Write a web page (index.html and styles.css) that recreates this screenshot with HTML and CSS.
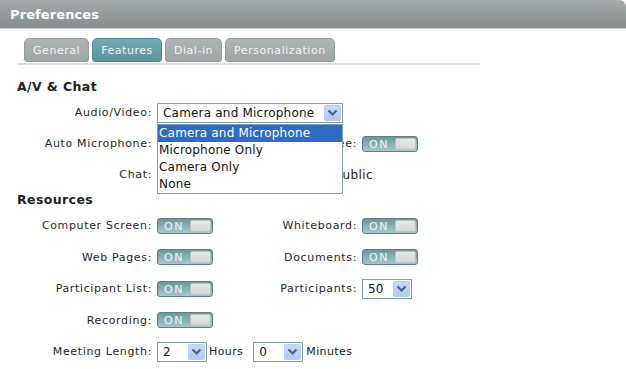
FILE: index.html
```html
<!DOCTYPE html>
<html>
<head>
<meta charset="utf-8">
<link rel="stylesheet" href="styles.css">
</head>
<body>
<div class="panel">
  <div class="header">Preferences</div>
  <div class="tabs">
    <span class="tab">General</span>
    <span class="tab active">Features</span>
    <span class="tab">Dial-in</span>
    <span class="tab">Personalization</span>
  </div>
  <div class="form">
    <div class="section">A/V &amp; Chat</div>
    <div class="row">
      <span class="lbl">Audio/Video:</span>
      <div class="wide">
        <div class="select-wrap">
          <div class="select sel-av"><span class="val">Camera and Microphone</span><span class="arrow"><svg width="11" height="8" viewBox="0 0 11 8"><path d="M1.5 1.5 L5.5 5.5 L9.5 1.5" fill="none" stroke="#4a5f86" stroke-width="2.2"/></svg></span></div>
          <div class="dropdown">
            <div class="opt selected">Camera and Microphone</div>
            <div class="opt">Microphone Only</div>
            <div class="opt">Camera Only</div>
            <div class="opt">None</div>
          </div>
        </div>
      </div>
    </div>
    <div class="row">
      <span class="lbl">Auto Microphone:</span>
      <span></span>
      <span class="lbl">Attendee:</span>
      <span class="toggle"><span class="on">ON</span><span class="knob"></span></span>
    </div>
    <div class="row">
      <span class="lbl">Chat:</span>
      <div class="wide chat-opts"><span class="chat-opt">Public</span></div>
    </div>
    <div class="section sec2">Resources</div>
    <div class="row r2">
      <span class="lbl">Computer Screen:</span>
      <span class="toggle"><span class="on">ON</span><span class="knob"></span></span>
      <span class="lbl">Whiteboard:</span>
      <span class="toggle"><span class="on">ON</span><span class="knob"></span></span>
    </div>
    <div class="row r2">
      <span class="lbl">Web Pages:</span>
      <span class="toggle"><span class="on">ON</span><span class="knob"></span></span>
      <span class="lbl">Documents:</span>
      <span class="toggle"><span class="on">ON</span><span class="knob"></span></span>
    </div>
    <div class="row r2">
      <span class="lbl">Participant List:</span>
      <span class="toggle"><span class="on">ON</span><span class="knob"></span></span>
      <span class="lbl">Participants:</span>
      <div class="select sel-small"><span class="val">50</span><span class="arrow"><svg width="11" height="8" viewBox="0 0 11 8"><path d="M1.5 1.5 L5.5 5.5 L9.5 1.5" fill="none" stroke="#4a5f86" stroke-width="2.2"/></svg></span></div>
    </div>
    <div class="row r2">
      <span class="lbl">Recording:</span>
      <span class="toggle"><span class="on">ON</span><span class="knob"></span></span>
    </div>
    <div class="row r2">
      <span class="lbl">Meeting Length:</span>
      <div class="wide length">
        <div class="select sel-small"><span class="val">2</span><span class="arrow"><svg width="11" height="8" viewBox="0 0 11 8"><path d="M1.5 1.5 L5.5 5.5 L9.5 1.5" fill="none" stroke="#4a5f86" stroke-width="2.2"/></svg></span></div>
        <span class="unit">Hours</span>
        <div class="select sel-small"><span class="val">0</span><span class="arrow"><svg width="11" height="8" viewBox="0 0 11 8"><path d="M1.5 1.5 L5.5 5.5 L9.5 1.5" fill="none" stroke="#4a5f86" stroke-width="2.2"/></svg></span></div>
        <span class="unit">Minutes</span>
      </div>
    </div>
  </div>
</div>
</body>
</html>
```

FILE: styles.css
```css
* { box-sizing: border-box; }
html, body { margin: 0; padding: 0; background: #ffffff; }
body { width: 626px; height: 369px; overflow: hidden; font-family: "DejaVu Sans", Verdana, sans-serif; color: #1a1a1a; }

.header {
  height: 28px;
  background: linear-gradient(#a4a9a9, #868c8c);
  border-top-right-radius: 7px;
  color: #ffffff;
  font-weight: bold;
  font-size: 13px;
  line-height: 29px;
  padding-left: 10px;
  letter-spacing: 0.1px;
  box-shadow: 0 1px 0 #c9cccc;
}

.tabs {
  display: flex;
  gap: 3px;
  margin: 10px 0 0 18px;
  padding-left: 6px;
  width: 462px;
  height: 27px;
  border-bottom: 2px solid #dcdcdc;
}
.tab {
  height: 24px;
  padding: 0 8px;
  font-size: 11px;
  line-height: 23px;
  color: #f4f4f4;
  letter-spacing: 0.55px;
  background: linear-gradient(#b0b5b5, #9fa4a4);
  border: 1px solid #979d9d;
  border-radius: 5px 5px 3px 3px;
}
.tab.active {
  background: linear-gradient(#75aab5, #5a929d);
  border-color: #4f8792;
}

.form { padding-top: 12px; }
.section {
  font-weight: bold;
  font-size: 12.5px;
  height: 20px;
  line-height: 20px;
  padding-left: 17px;
  letter-spacing: 0.4px;
  color: #222;
}
.sec2 { height: 20px; }

.row {
  display: grid;
  grid-template-columns: 152px 120px 75px auto;
  column-gap: 5px;
  align-items: center;
  height: 31px;
}
.row.r2 { height: 31.5px; }
.lbl {
  justify-self: end;
  white-space: nowrap;
  font-size: 11px;
  letter-spacing: 0.65px;
  color: #262626;
}
.wide { grid-column: 2 / 5; display: flex; align-items: center; }

.select-wrap { position: relative; }
.select {
  display: flex;
  align-items: center;
  justify-content: space-between;
  height: 20px;
  border: 1px solid #7f9db9;
  background: #fff;
  padding: 0 1px 0 5px;
  font-size: 12px;
  letter-spacing: 0.2px;
  color: #111;
}
.sel-av { width: 186px; }
.sel-small { width: 50px; }
.arrow {
  width: 17px;
  height: 16px;
  display: flex;
  align-items: center;
  justify-content: center;
  background: linear-gradient(#c9d8fc, #b3c8f6);
  border: 1px solid #bccdf3;
  border-radius: 2px;
}
.dropdown {
  position: absolute;
  left: 0;
  top: 21px;
  width: 186px;
  border: 1px solid #7f9db9;
  background: #fff;
}
.opt {
  height: 17px;
  line-height: 17px;
  font-size: 12px;
  letter-spacing: 0.2px;
  padding-left: 1px;
  color: #111;
}
.opt.selected { background: #316ac5; color: #fff; }

.chat-opts { font-size: 12px; letter-spacing: 0.4px; padding-left: 178px; }

.toggle {
  display: flex;
  width: 56px;
  height: 16px;
  border: 1px solid #5f7f82;
  border-radius: 3px;
  background: linear-gradient(#6a979b, #a7c8ca);
  padding: 1px;
  overflow: hidden;
}
.toggle .on {
  width: 31px;
  color: #f2f7f7;
  font-size: 11px;
  letter-spacing: 1.5px;
  line-height: 13px;
  padding-left: 5px;
}
.toggle .knob {
  flex: 1;
  background: linear-gradient(#e8e8e8, #d6d6d6);
  border: 1px solid #b8c4c4;
  border-radius: 2px;
}

.length { gap: 2px; }
.length .unit { font-size: 11px; letter-spacing: 0.4px; margin-right: 8px; }
.length .unit:last-child { margin-right: 0; margin-left: 1px; }
```
